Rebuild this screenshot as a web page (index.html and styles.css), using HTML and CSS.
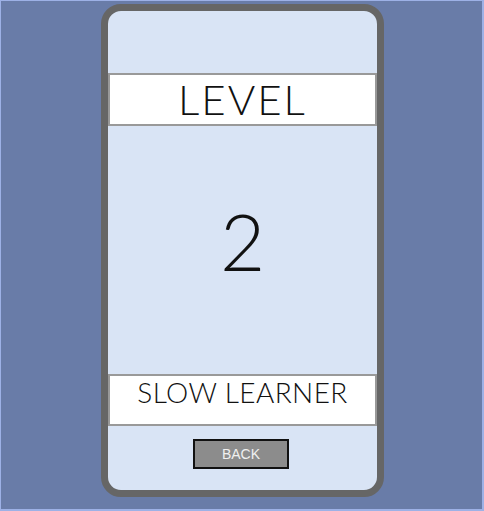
FILE: index.html
```html
<!DOCTYPE html>
<html>
<head>
<meta charset="utf-8">
<link rel="stylesheet" href="styles.css">
</head>
<body>
<div class="page">
  <div class="phone">
    <div class="title-box">LEVEL</div>
    <div class="number">2</div>
    <div class="rank-box">SLOW LEARNER</div>
    <div class="actions">
      <button class="back">BACK</button>
    </div>
  </div>
</div>
</body>
</html>
```
FILE: styles.css
```css
html, body {
  margin: 0;
  padding: 0;
  background: #697ca8;
}
.page {
  box-sizing: border-box;
  width: 484px;
  height: 511px;
  border-top: 1px solid #9db1e6;
  border-left: 1px solid #9db1e6;
  border-right: 2px solid #9db1e6;
  border-bottom: 2px solid #9db1e6;
  padding-top: 3px;
  padding-left: 100px;
}
.phone {
  box-sizing: border-box;
  width: 283px;
  height: 493px;
  border: 7px solid #666666;
  border-radius: 20px;
  background: #d9e4f5;
  display: flex;
  flex-direction: column;
  padding-top: 62px;
  font-family: Lato, "Open Sans", sans-serif;
  color: #111;
}
.title-box {
  box-sizing: border-box;
  height: 53px;
  background: #ffffff;
  border: 2px solid #999999;
  text-align: center;
  font-size: 42px;
  font-weight: 300;
  letter-spacing: 2px;
  line-height: 49px;
}
.number {
  box-sizing: border-box;
  height: 248px;
  text-align: center;
  font-size: 78px;
  font-weight: 300;
  line-height: 230px;
}
.rank-box {
  box-sizing: border-box;
  height: 52px;
  background: #ffffff;
  border: 2px solid #999999;
  text-align: center;
  font-size: 28px;
  font-weight: 300;
  letter-spacing: 0.4px;
  line-height: 32px;
}
.actions {
  display: flex;
  justify-content: center;
  padding-top: 13px;
  padding-right: 3px;
}
.back {
  box-sizing: border-box;
  width: 96px;
  height: 30px;
  margin: 0;
  padding: 0;
  background: #8c8c8c;
  border: 2px solid #111111;
  color: #f0f0f0;
  font-family: "Liberation Sans", Arial, sans-serif;
  font-size: 14px;
  line-height: 26px;
}
```
